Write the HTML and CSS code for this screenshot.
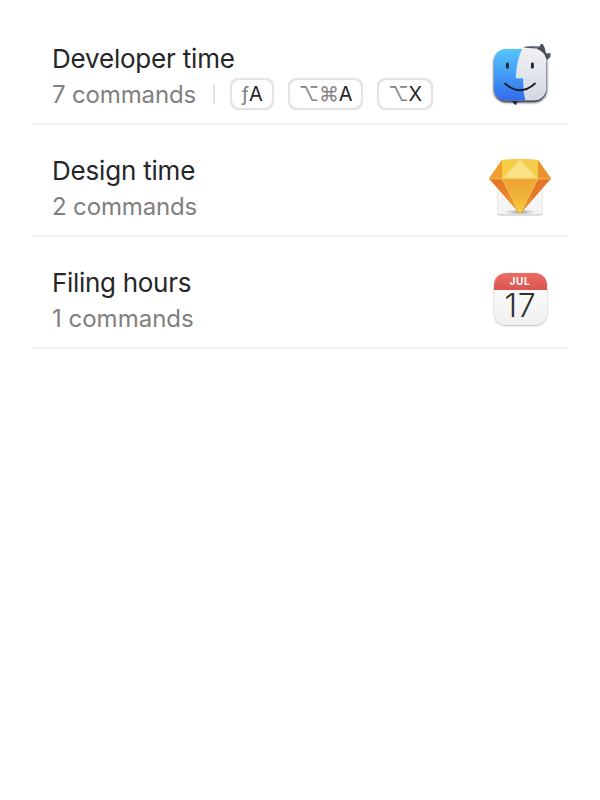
FILE: index.html
```html
<!DOCTYPE html>
<html lang="en">
<head>
<meta charset="utf-8">
<title>Commands</title>
<link rel="stylesheet" href="styles.css">
</head>
<body>
<main class="list">
  <section class="row">
    <div class="info">
      <h2 class="title title-dev">Developer time</h2>
      <div class="details"><span class="count">7 commands</span><span class="separator"></span>
        <div class="keys">
          <kbd class="key key-fn"><span class="cap"><span class="mod">ƒ</span><span>A</span></span></kbd>
          <kbd class="key key-wide"><span class="cap"><span class="mod">⌥</span><span class="mod">⌘</span><span>A</span></span></kbd>
          <kbd class="key key-opt"><span class="cap"><span class="mod">⌥</span><span>X</span></span></kbd>
        </div>
      </div>
    </div>
    <svg class="icon" viewBox="0 0 80 80">
      <defs>
        <linearGradient id="blue" x1="0" y1="0" x2="0" y2="1"><stop offset="0" stop-color="#58c8fa"/><stop offset=".5" stop-color="#429af5"/><stop offset="1" stop-color="#3268ea"/></linearGradient>
        <linearGradient id="silver" x1="0" y1="0" x2="0" y2="1"><stop offset="0" stop-color="#f0f1f3"/><stop offset="1" stop-color="#d2d7e2"/></linearGradient>
        <clipPath id="face"><rect x="13.8" y="14" width="52.4" height="51.6" rx="12"/></clipPath>
        <filter id="soft" x="-20%" y="-20%" width="140%" height="140%"><feGaussianBlur stdDeviation=".8"/></filter>
      </defs>
      <path d="M43 12.8Q49 10 60 11.5L60.5 9L63 9.2L64.5 12.5L66 18L70.5 18L70.5 21.5L67.5 25L64 20L57 13.6Z" fill="#4b4f5a"/>
      <path d="M45 12Q51 10.8 58 12.3M66 18.5L70 19" fill="none" stroke="#8d929d" stroke-width="1"/>
      <path d="M32 66H38L36 70L34 69Z" fill="#292e38"/>
      <rect x="13.7" y="15.4" width="53" height="52" rx="12.5" fill="#202532" filter="url(#soft)"/>
      <g clip-path="url(#face)">
        <rect x="13" y="13" width="54" height="54" fill="url(#silver)"/>
        <path d="M13 13H43Q37 24 36 43H43.5Q43 56 46 67H13Z" fill="url(#blue)"/>
        <path d="M43 13Q37 24 36 43H43.5Q43 56 46 67" fill="none" stroke="#fff" stroke-opacity=".65" stroke-width=".7"/>
      </g>
      <path d="M27.4 29V32.2M52.4 29V32.2" stroke="#202632" stroke-width="2.9" stroke-linecap="round"/>
      <path d="M25 48.5Q40 62 55 48.5" fill="none" stroke="#171d29" stroke-width="1.8" stroke-linecap="round"/>
    </svg>
  </section>
  <section class="row">
    <div class="info">
      <h2 class="title">Design time</h2>
      <div class="details"><span class="count">2 commands</span></div>
    </div>
    <svg class="icon" viewBox="0 -3 80 80">
      <defs>
        <linearGradient id="paper" x1="0" y1="0" x2="0" y2="1"><stop offset="0" stop-color="#fff"/><stop offset="1" stop-color="#f3f3f3"/></linearGradient>
        <linearGradient id="gold" x1="0" y1="0" x2="0" y2="1"><stop offset="0" stop-color="#eda235"/><stop offset=".55" stop-color="#f0b43a"/><stop offset="1" stop-color="#fad83d"/></linearGradient>
        <linearGradient id="left" x1="0" y1="0" x2="1" y2="1"><stop offset="0" stop-color="#e27026"/><stop offset=".5" stop-color="#e9842b"/><stop offset="1" stop-color="#f5ba39"/></linearGradient>
        <linearGradient id="right" x1="1" y1="0" x2="0" y2="1"><stop offset="0" stop-color="#e3732a"/><stop offset=".5" stop-color="#e57829"/><stop offset="1" stop-color="#efa33a"/></linearGradient>
        <radialGradient id="shade"><stop offset="0" stop-color="#555" stop-opacity=".65"/><stop offset="1" stop-color="#777" stop-opacity="0"/></radialGradient>
        <filter id="paper-shadow"><feGaussianBlur stdDeviation=".7"/></filter>
      </defs>
      <rect x="17.5" y="9.5" width="45" height="56" rx="2" fill="#999" opacity=".6" filter="url(#paper-shadow)"/>
      <rect x="17.5" y="8.5" width="45" height="56" rx="2" fill="url(#paper)"/>
      <ellipse cx="40" cy="62" rx="16" ry="2.5" fill="url(#shade)"/>
      <path d="M9 28.5L22 10L40 9L58 10L71 28.5L40 64Z" fill="#efa638"/>
      <path d="M9 28.5L22 10V28.5Z" fill="#efa02f"/>
      <path d="M58 10L71 28.5H58Z" fill="#e99230"/>
      <path d="M22 10L40 9L22 28.5Z" fill="#f7ce43"/>
      <path d="M58 10L40 9L58 28.5Z" fill="#f5cc49"/>
      <path d="M40 9L58 28.5H22Z" fill="#f9e184"/>
      <path d="M9 28.5H22L40 64Z" fill="url(#left)"/>
      <path d="M71 28.5H58L40 64Z" fill="url(#right)"/>
      <path d="M22 28.5H58L40 64Z" fill="url(#gold)"/>
      <path d="M9.5 28.8H70.5M22 28.5L40 63.5L58 28.5M22 28.5L40 9.5L58 28.5" fill="none" stroke="#f9ce56" stroke-width=".8"/>
    </svg>
  </section>
  <section class="row">
    <div class="info">
      <h2 class="title title-filing">Filing hours</h2>
      <div class="details"><span class="count count-one">1 commands</span></div>
    </div>
    <div class="icon calendar"><div class="calendar-tile"><div class="month">JUL</div><div class="day">17</div></div></div>
  </section>
</main>
</body>
</html>
```
FILE: styles.css
```css
* { box-sizing: border-box; }
body {
  margin: 0;
  background: #fff;
  font-family: Inter, "Liberation Sans", sans-serif;
  color: #262628;
}
.list { padding: 13px 32px 0; }
.row {
  height: 112px;
  padding: 22px 8px 0 20px;
  border-bottom: 2px solid #f4f4f4;
  display: flex;
  justify-content: space-between;
}
.title {
  margin: 8px 0 0;
  font-size: 26px;
  line-height: 32px;
  font-weight: 400;
  letter-spacing: -.2px;
}
.title-filing { letter-spacing: -.3px; }
.details { display: flex; align-items: center; height: 32px; margin-top: 3px; }
.count { width: 145px; padding-top: 2px; font-size: 24px; line-height: 32px; letter-spacing: -.15px; color: #808080; white-space: nowrap; }
.count-one { letter-spacing: 0; }
.separator { width: 2px; height: 20px; margin-left: 16px; background: #e3e3e3; }
.keys { display: flex; gap: 14px; margin-left: 15px; }
.key {
  height: 32px;
  padding: 2px;
  border-radius: 8px;
  background: #e4e4e4;
  font: 20px/28px Inter, "Liberation Sans", sans-serif;
}
.cap {
  display: flex;
  align-items: center;
  justify-content: center;
  height: 28px;
  border-radius: 8px;
  background: #fff;
}
.key-fn { width: 44px; }
.key-wide { width: 75px; letter-spacing: -.3px; }
.key-opt { width: 56px; letter-spacing: -.2px; }
.mod { color: #858585; }
.icon { width: 80px; height: 80px; flex: none; }
.calendar { padding: 14px 0 0 13.5px; }
.calendar-tile {
  width: 53px;
  height: 52px;
  border-radius: 12px;
  overflow: hidden;
  background: linear-gradient(#fff, #f0f0ef);
  box-shadow: 0 1px 2px #8888, 0 0 1px #9999;
  text-align: center;
}
.month {
  height: 17px;
  background: linear-gradient(#eb6c62, #d9564e);
  font-size: 10px;
  line-height: 16px;
  font-weight: 700;
  letter-spacing: .7px;
  color: #fff;
}
.day { padding-left: 1px; font-size: 32px; line-height: 32px; font-weight: 300; letter-spacing: .7px; color: #303030; }
```
